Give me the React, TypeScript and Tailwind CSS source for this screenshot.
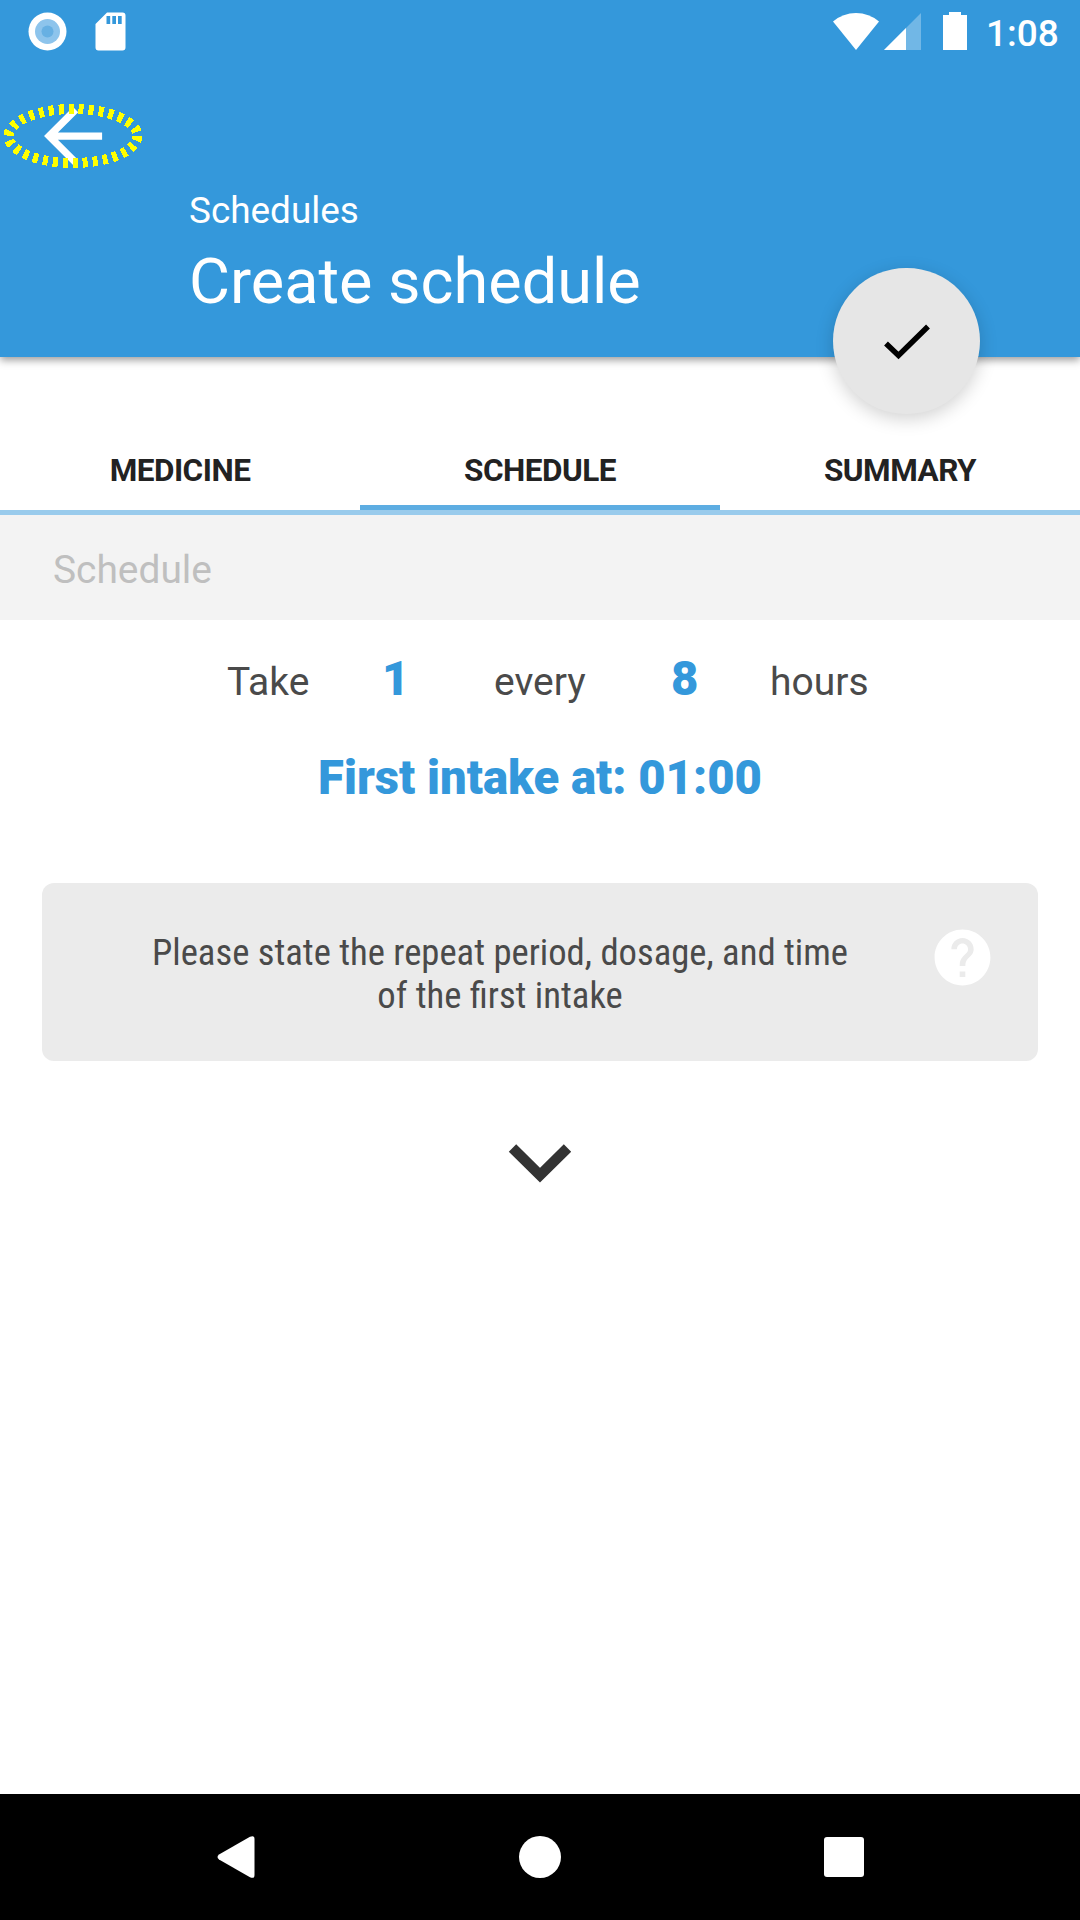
import type { ReactNode } from 'react';

function StatusBar() {
  return (
    <div className="flex h-[63px] items-start text-white">
      <svg className="ml-7 mt-3 h-[39px] w-[39px]" viewBox="28 12 39 39">
        <circle cx="47.5" cy="31.5" r="19" fill="#fff" />
        <circle cx="47.5" cy="31.5" r="12.5" fill="#8dc4ec" />
        <circle cx="47.5" cy="31.5" r="6" fill="#67b0e3" />
      </svg>
      <svg className="ml-7 mt-3 h-[39px] w-8" viewBox="95 12 32 39">
        <path
          fill="#fff"
          fillRule="evenodd"
          d="M107 12.5h15.500q3 0 3 3v32q0 3-3 3h-24q-3 0-3-3V24zM106.500 16v8h3.700v-8zM112.300 16v8h3.700v-8zM118 16v8h3.700v-8z"
        />
      </svg>
      <svg className="ml-[706px] mt-3 h-[39px] w-[46px]" viewBox="833 12 46 39">
        <path fill="#fff" d="M833 21.500Q843 13 856 13T879 21.500L856 50z" />
      </svg>
      <svg className="ml-[5px] mt-3 h-[39px] w-[37px]" viewBox="884 12 37 39">
        <path fill="#fff" fillOpacity="0.3" d="M921 13v37h-37z" />
        <path fill="#fff" d="M906 28v22h-22z" />
      </svg>
      <svg className="ml-[22px] mt-3 h-[39px] w-6" viewBox="943 12 24 39">
        <path fill="#fff" d="M949 12h12v3h6v35h-24V15h6z" />
      </svg>
      <span className="ml-[19px] mt-3 text-[37px] leading-[43px] font-medium">1:08</span>
    </div>
  );
}

function BackButton() {
  return (
    <svg className="h-20 w-[150px]" viewBox="0 96 150 80">
      <path
        fill="#fff"
        transform="translate(29.5 92.5) scale(3.63)"
        d="M20 11H7.83l5.590-5.590L12 4l-8 8 8 8 1.410-1.410L7.830 13H20v-2z"
      />
      <ellipse
        cx="73"
        cy="136"
        rx="64.5"
        ry="27"
        fill="none"
        stroke="#ff0"
        strokeWidth="10"
        strokeDasharray="5 5"
        shapeRendering="crispEdges"
      />
    </svg>
  );
}

function Tab({ active, children }: { active?: boolean; children: ReactNode }) {
  return (
    <div className={active ? 'flex-1 border-b-[5px] border-[#5dade2]' : 'flex-1 border-b-[5px] border-transparent'}>
      <div className="h-[69px] text-center text-[31.5px] leading-[70px] font-bold tracking-[-0.5px] text-[#222]">{children}</div>
    </div>
  );
}

export default function App() {
  return (
    <div className="flex h-[1920px] w-[1080px] flex-col overflow-hidden bg-white font-[Roboto,sans-serif]">
      <header className="relative h-[357px] shrink-0 bg-[#3498db] text-white shadow-[0_3px_8px_rgba(0,0,0,0.4)]">
        <StatusBar />
        <div className="mt-[33px]">
          <BackButton />
        </div>
        <div className="mt-[9px] pl-[189px]">
          <div className="text-[36.9px] leading-[52px]">Schedules</div>
          <div className="mt-2 text-[63px] leading-[74px]">Create schedule</div>
        </div>
        <button className="absolute top-[268px] left-[833px] h-[146px] w-[147px] rounded-full bg-[#e6e6e6] shadow-[0_5px_18px_rgba(0,0,0,0.18)]">
          <svg className="h-[146px] w-[147px]" viewBox="833 268 147 146">
            <path d="M886 343.500L898.500 355.500L928 326.500" fill="none" stroke="#000" strokeWidth="5.500" />
          </svg>
        </button>
      </header>

      <nav className="mt-[79px] flex h-[79px] shrink-0 border-b-[5px] border-[#99cbec]">
        <Tab>MEDICINE</Tab>
        <Tab active>SCHEDULE</Tab>
        <Tab>SUMMARY</Tab>
      </nav>

      <div className="h-[105px] shrink-0 bg-[#f3f3f3] pl-[53px] text-[38.9px] leading-[109px] text-[#bfbfbf]">Schedule</div>

      <main className="flex-1">
        <div className="mt-[29px] flex h-[60px] items-baseline text-[39px] leading-[60px] text-[#4a4a4a]">
          <span className="ml-[227px] w-[155px]">Take</span>
          <span className="w-[112px] text-[47.25px] font-black text-[#3498db]">1</span>
          <span className="w-[177px]">every</span>
          <span className="w-[99px] text-[47.25px] font-black text-[#3498db]">8</span>
          <span>hours</span>
        </div>
        <div className="mt-[39px] text-center text-[47.25px] leading-[60px] font-black text-[#3498db]">First intake at: 01:00</div>

        <section className="mx-[42px] mt-[75px] flex h-[178px] rounded-xl bg-[#ebebeb]">
          <p className="ml-[84px] mt-12 w-[748px] text-center text-[36.65px] leading-[43px] text-[#4a4a4a] [font-family:'Roboto_Condensed',Roboto,sans-serif] [font-stretch:75%]">
            Please state the repeat period, dosage, and time
            <br />
            of the first intake
          </p>
          <svg className="ml-[55px] mt-[41px] h-[67px] w-[67px]" viewBox="0 0 24 24">
            <path
              fill="#fff"
              d="M12 2C6.480 2 2 6.480 2 12s4.480 10 10 10 10-4.480 10-10S17.520 2 12 2zm1 17h-2v-2h2v2zm2.070-7.750l-.9.920C13.450 12.900 13 13.500 13 15h-2v-.5c0-1.100.45-2.100 1.170-2.830l1.240-1.260c.37-.36.590-.86.590-1.410 0-1.100-.9-2-2-2s-2 .9-2 2H8c0-2.210 1.790-4 4-4s4 1.790 4 4c0 .88-.36 1.680-.93 2.250z"
            />
          </svg>
        </section>

        <svg className="mx-auto mt-[76px] h-[50px] w-[70px]" viewBox="505 1137 70 50">
          <path d="M512.500 1148L540 1175.200L567.500 1148" fill="none" stroke="#333" strokeWidth="10.500" />
        </svg>
      </main>

      <footer className="flex h-[126px] shrink-0 items-center bg-black">
        <svg className="ml-[217px] h-[44px] w-[38px]" viewBox="217 1835 38 44">
          <path fill="#fff" d="M219 1854.500L250 1836.800Q254.500 1834.800 254.500 1839V1875Q254.500 1879.200 250 1877.200L219 1859.500Q216 1857 219 1854.500z" />
        </svg>
        <div className="ml-[264px] h-[42px] w-[42px] rounded-full bg-white" />
        <div className="ml-[263px] h-10 w-10 rounded-[3px] bg-white" />
      </footer>
    </div>
  );
}
